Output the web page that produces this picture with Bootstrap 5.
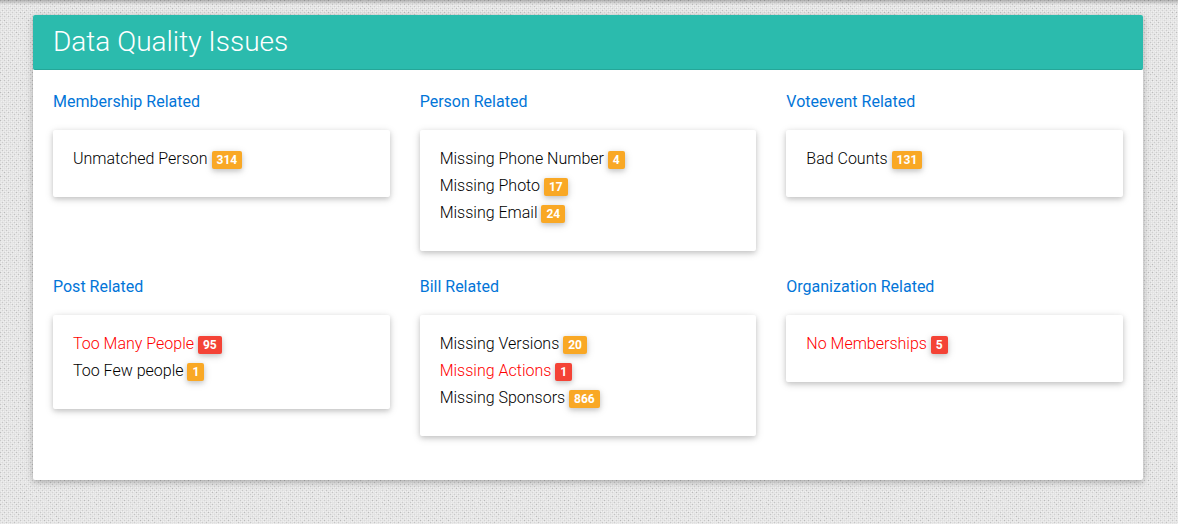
<!DOCTYPE html>
<html lang="en">
<head>
<meta charset="utf-8">
<meta name="viewport" content="width=device-width, initial-scale=1">
<title>Data Quality Issues</title>
<link href="https://cdn.jsdelivr.net/npm/bootstrap@5.3.0/dist/css/bootstrap.min.css" rel="stylesheet">
<style>
  body {
    font-family: Roboto, "Liberation Sans", sans-serif;
    font-weight: 300;
    color: #000;
    background-color: #e2e2e2;
    /* woven paper texture: two offset dot grids, broken up by uneven grain */
    background-image:
      linear-gradient(rgba(0,0,0,.24), rgba(0,0,0,0)),
      url("data:image/svg+xml,%3Csvg xmlns='http://www.w3.org/2000/svg' width='96' height='96'%3E%3Cfilter id='g' x='0' y='0' width='1' height='1' color-interpolation-filters='sRGB'%3E%3CfeTurbulence type='fractalNoise' baseFrequency='.45' numOctaves='2' stitchTiles='stitch'/%3E%3CfeColorMatrix values='0 0 0 0 .91 0 0 0 0 .91 0 0 0 0 .91 2 0 0 0 -.6'/%3E%3C/filter%3E%3Crect width='96' height='96' filter='url(%23g)'/%3E%3C/svg%3E"),
      conic-gradient(from 270deg at 1px 1px, #b8b8b8 90deg, transparent 0),
      conic-gradient(from 270deg at 1px 1px, #c0c0c0 90deg, transparent 0),
      conic-gradient(from 270deg at 1px 1px, #f2f2f2 90deg, transparent 0);
    background-size: 100% 5px, 96px 96px, 4px 4px, 4px 4px, 2px 2px;
    background-position: 0 0, 0 0, 0 0, 2px 2px, 1px 1px;
    background-repeat: no-repeat, repeat, repeat, repeat, repeat;
  }
  main { padding: 15px 35px 44px 33px; }
  .panel, .issue-box { border: 0; border-radius: 2px; --bs-card-color: #000; }
  .panel { box-shadow: 0 2px 5px rgba(0,0,0,.16), 0 2px 10px rgba(0,0,0,.12); }
  .issue-box { padding: 15px 20px 25px; box-shadow: 0 2px 5px rgba(0,0,0,.16), 0 2px 10px rgba(0,0,0,.12); }
  .panel > .card-header {
    padding: 10px 20px 11px; border-bottom: 1px solid #25a698; border-radius: 2px;
    background: #2bbbad; color: #fff;
  }
  .panel h1 { font-size: 28px; line-height: 33px; font-weight: 300; }
  .panel > .card-body { padding: 20px 20px 44px; }
  .issues { --bs-gutter-x: 30px; row-gap: 24px; }
  .issues h2 { font-size: 16px; line-height: 24px; font-weight: 400; color: #0275d8; margin-bottom: 16px; }
  .issue-box li { line-height: 27px; }
  .issue-box a { color: #000; text-decoration: none; }
  .issue-box a.critical { color: #f00; }
  .issue-box .badge {
    font-size: 12px; line-height: 12px; font-weight: 700; padding: 3px 5px; border-radius: 2px;
    background: #f9a825; box-shadow: 0 2px 5px rgba(0,0,0,.16), 0 2px 10px rgba(0,0,0,.12);
    vertical-align: middle;
  }
  .issue-box .critical + .badge { background: #f44336; }
</style>
</head>
<body>
<main>
  <section class="card panel">
    <div class="card-header"><h1 class="mb-0">Data Quality Issues</h1></div>
    <div class="card-body">
      <div class="row row-cols-3 issues">
        <div class="col"><h2>Membership Related</h2>
          <div class="card issue-box"><ul class="list-unstyled mb-0">
            <li><a href="#">Unmatched Person</a> <span class="badge">314</span></li>
          </ul></div></div>
        <div class="col"><h2>Person Related</h2>
          <div class="card issue-box"><ul class="list-unstyled mb-0">
            <li><a href="#">Missing Phone Number</a> <span class="badge">4</span></li>
            <li><a href="#">Missing Photo</a> <span class="badge">17</span></li>
            <li><a href="#">Missing Email</a> <span class="badge">24</span></li>
          </ul></div></div>
        <div class="col"><h2>Voteevent Related</h2>
          <div class="card issue-box"><ul class="list-unstyled mb-0">
            <li><a href="#">Bad Counts</a> <span class="badge">131</span></li>
          </ul></div></div>
        <div class="col"><h2>Post Related</h2>
          <div class="card issue-box"><ul class="list-unstyled mb-0">
            <li><a href="#" class="critical">Too Many People</a> <span class="badge">95</span></li>
            <li><a href="#">Too Few people</a> <span class="badge">1</span></li>
          </ul></div></div>
        <div class="col"><h2>Bill Related</h2>
          <div class="card issue-box"><ul class="list-unstyled mb-0">
            <li><a href="#">Missing Versions</a> <span class="badge">20</span></li>
            <li><a href="#" class="critical">Missing Actions</a> <span class="badge">1</span></li>
            <li><a href="#">Missing Sponsors</a> <span class="badge">866</span></li>
          </ul></div></div>
        <div class="col"><h2>Organization Related</h2>
          <div class="card issue-box"><ul class="list-unstyled mb-0">
            <li><a href="#" class="critical">No Memberships</a> <span class="badge">5</span></li>
          </ul></div></div>
      </div>
    </div>
  </section>
</main>
<script src="https://cdn.jsdelivr.net/npm/bootstrap@5.3.0/dist/js/bootstrap.bundle.min.js"></script>
</body>
</html>
